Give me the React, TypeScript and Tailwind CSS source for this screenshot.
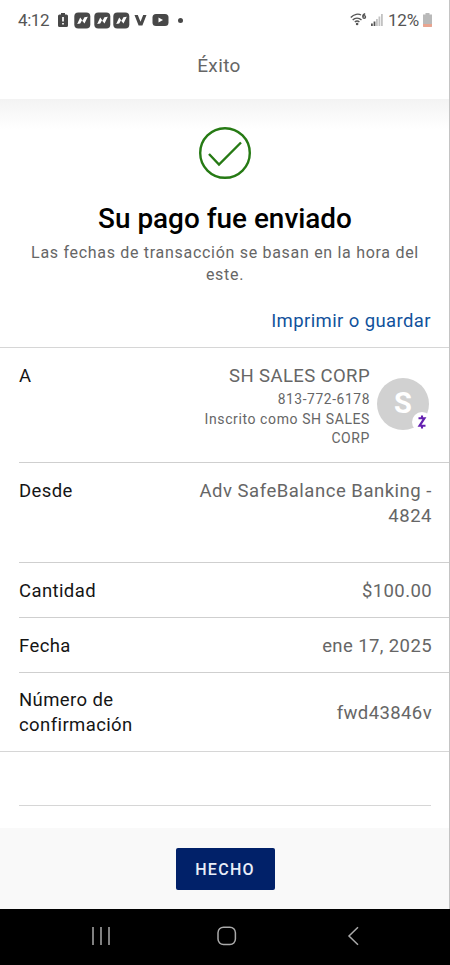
import type { ReactNode } from 'react'

function AppBadge() {
  return (
    <svg width="17" height="17" viewBox="0 0 17 17">
      <rect x="0.3" y="0.5" width="16" height="16" rx="4" fill="#484848" />
      <path d="M3.2 12 6.200 5.500 8.600 8.800 10.400 5.200 13.800 4.800 10.500 11.600 7.900 8.400 6.200 11.600Z" fill="#fff" />
    </svg>
  )
}

function StatusBar() {
  return (
    <div className="flex h-10 items-center justify-between pl-[18px] pr-[17px] text-[#555]">
      <div className="flex items-center">
        <span className="w-[40px] text-[17px] leading-5 tracking-[-0.4px]">4:12</span>
        <svg width="10" height="14" viewBox="0 0 10 14">
          <path d="M3 0h4v1.500h1.500A1.500 1.500 0 0 1 10 3v9.500A1.500 1.500 0 0 1 8.500 14h-7A1.500 1.500 0 0 1 0 12.500V3a1.500 1.500 0 0 1 1.500-1.500H3Z" fill="#484848" />
          <path d="M5 4v4.500M5 10v1.600" stroke="#fff" strokeWidth="1.700" />
        </svg>
        <div className="ml-[6px] flex gap-[2.500px]">
          <AppBadge />
          <AppBadge />
          <AppBadge />
        </div>
        <svg className="ml-[4px]" width="13" height="11" viewBox="0 0 13 11">
          <path d="M0.500 0h3.300l2.700 6.800L9.200 0h3.300L8.400 10.500H4.600Z" fill="#484848" />
        </svg>
        <svg className="ml-[5px]" width="17" height="12" viewBox="0 0 17 12">
          <rect x="0.500" width="16" height="12" rx="3.500" fill="#484848" />
          <path d="M6.500 3.500v5l4.500-2.500Z" fill="#fff" />
        </svg>
        <span className="ml-[9px] size-[5px] rounded-full bg-[#484848]" />
      </div>
      <div className="flex items-center">
        <svg width="17" height="14" viewBox="0 0 17 14" fill="none" stroke="#555" strokeWidth="1.400">
          <path d="M0.800 4.500C4 0.900 8.500 0.500 11 2M2.700 6.900C5 4.500 9 4.500 11.500 6.900M4.800 9.100C6.200 7.800 8 7.800 9.400 9.100" />
          <circle cx="7.100" cy="11" r="0.600" fill="#555" />
          <path d="M15.200 0.700C13.500 1 12.800 2.500 12.800 3.800" />
          <circle cx="14.200" cy="3.900" r="1.300" />
        </svg>
        <svg className="ml-[4px]" width="12" height="12" viewBox="0 0 12 12">
          <path d="M0 9.500h1.800v2.500H0zM2.600 7.500h1.800v4.500H2.600z" fill="#555" />
          <path d="M5 5h1.800v7H5zM7.500 2.500h1.800v9.500H7.500zM10 0h1.800v12H10z" fill="#c2c2c2" />
        </svg>
        <span className="ml-[5px] w-[35px] text-[17px] leading-5 tracking-[-0.2px]">12%</span>
        <svg width="9" height="14" viewBox="0 0 9 14">
          <path d="M2.500 0h4v1.500H9V13a1 1 0 0 1-1 1H1a1 1 0 0 1-1-1V1.500h2.500Z" fill="#b9b9b9" />
          <path d="M0 11h9v2a1 1 0 0 1-1 1H1a1 1 0 0 1-1-1Z" fill="#e9a48f" />
        </svg>
      </div>
    </div>
  )
}

function Row({ label, height, children }: { label: string; height: string; children: ReactNode }) {
  return (
    <div className={`ml-[19px] flex justify-between border-b border-[#cfcfcf] pr-[17px] pt-[16px] ${height}`}>
      <span className="text-[#151515]">{label}</span>
      {children}
    </div>
  )
}

function Avatar() {
  return (
    <div className="relative mt-[13.500px] size-[52px] rounded-full bg-[#d1d1d1]">
      <span className="flex h-full items-center justify-center text-[29px] font-bold tracking-normal text-white">S</span>
      <div className="absolute -right-[3px] bottom-[-2px] flex size-[20px] items-center justify-center rounded-full bg-white">
        <svg width="10" height="16" viewBox="0 0 10 16" fill="none" stroke="#6420b0" strokeWidth="2.100">
          <path d="M1.500 4.200H7.500L2.500 11.800H8.500M5 1.500v2.700M5 11.800v2.700" />
        </svg>
      </div>
    </div>
  )
}

export default function App() {
  return (
    <div className="flex h-[965px] w-[450px] flex-col overflow-hidden bg-white font-['Roboto',sans-serif]">
      <div className="flex h-[909px] flex-col border-r border-[#c4c4c4]">
        <StatusBar />
        <div className="flex h-[59px] items-center justify-center pb-[7px] pr-[11px] text-[19px] tracking-[0.4px] text-[#666]">
          Éxito
        </div>

        <main className="flex h-[249px] flex-col items-center border-b border-[#d6d6d6] bg-linear-to-b from-[#f3f3f3] to-white to-[30px] pt-[28px]">
          <svg width="52" height="52" viewBox="0 0 52 52" fill="none" stroke="#267a14" strokeWidth="2.400">
            <circle cx="26" cy="26" r="24.800" />
            <path d="M10 27 20 37.500 42 15.500" />
          </svg>
          <h1 className="ml-px mt-[23px] text-[27.900px] font-medium leading-[34px] text-black">Su pago fue enviado</h1>
          <p className="ml-px mt-[6px] w-[400px] text-center text-[16px] leading-[22px] tracking-[0.7px] text-[#666]">
            Las fechas de transacción se basan en la hora del este.
          </p>
          <a className="mr-[18px] mt-[23px] self-end text-[18.500px] leading-6 tracking-[0.4px] text-[#11529c]">
            Imprimir o guardar
          </a>
        </main>

        <section className="text-[18.500px] leading-[25px] tracking-[0.4px] text-[#666]">
          <Row label="A" height="h-[115px]">
            <div className="flex gap-[7px] pr-[3px]">
              <div className="w-[180px] text-right">
                <p>SH SALES CORP</p>
                <p className="text-[13.800px] leading-[20px] tracking-[0.6px]">813-772-6178</p>
                <p className="mt-px text-[14px] leading-[19px] tracking-[0.6px]">Inscrito como SH SALES CORP</p>
              </div>
              <Avatar />
            </div>
          </Row>
          <Row label="Desde" height="h-[100px]">
            <p className="w-[240px] text-right tracking-[0.520px]">Adv SafeBalance Banking - 4824</p>
          </Row>
          <Row label="Cantidad" height="h-[55px]">
            <p>$100.00</p>
          </Row>
          <Row label="Fecha" height="h-[55px]">
            <p>ene 17, 2025</p>
          </Row>
          <div className="flex h-[79px] items-center justify-between border-b border-[#d6d6d6] pl-[19px] pr-[17px] pt-[2px]">
            <span className="w-[130px] text-[#151515]">Número de confirmación</span>
            <p>fwd43846v</p>
          </div>
          <div className="ml-[19px] mr-[18px] h-[54px] border-b border-[#d6d6d6]" />
        </section>

        <footer className="mt-[22px] flex flex-1 justify-center bg-[#f9f9f9] pt-[20px]">
          <button className="ml-px h-[42px] w-[99px] rounded-[2px] bg-[#012169] pt-px text-[16px] font-medium tracking-[1.300px] text-[#e8edf8]">
            HECHO
          </button>
        </footer>
      </div>

      <nav className="flex h-[56px] items-center bg-black pb-[2px] pl-[91px]">
        <svg width="20" height="20" viewBox="0 0 20 20" stroke="#aaa" strokeWidth="1.500">
          <path d="M2 1v18M10 1v18M18 1v18" />
        </svg>
        <svg className="ml-[106px]" width="20" height="20" viewBox="0 0 20 20" fill="none" stroke="#aaa" strokeWidth="1.500">
          <rect x="1" y="1.200" width="17.400" height="17.400" rx="5.500" />
        </svg>
        <svg className="ml-[110px]" width="12" height="20" viewBox="0 0 12 20" fill="none" stroke="#aaa" strokeWidth="1.500">
          <path d="M11 1.200 2 10l9 8.800" />
        </svg>
      </nav>
    </div>
  )
}
